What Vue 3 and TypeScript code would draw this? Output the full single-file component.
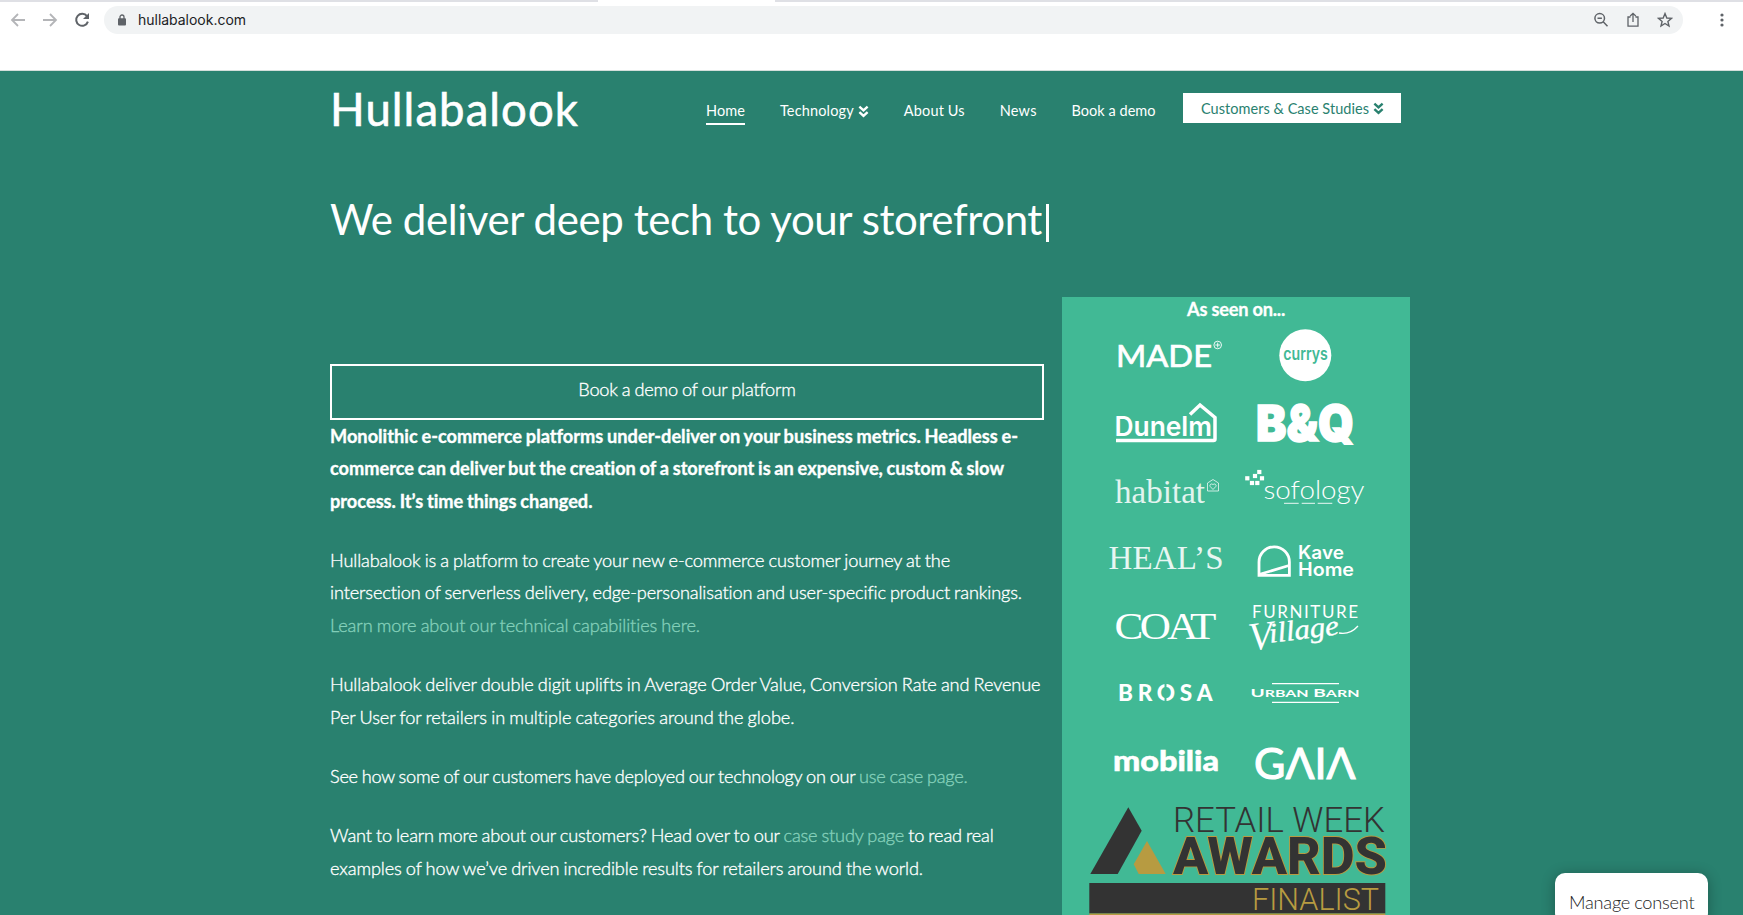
<script setup lang="ts">
import type { Directive } from 'vue'

interface NavItem {
  label: string
  width: number
  active?: boolean
  chevron?: boolean
}

const nav: NavItem[] = [
  { label: 'Home', width: 39, active: true },
  { label: 'Technology', width: 74, chevron: true },
  { label: 'About Us', width: 61 },
  { label: 'News', width: 37 },
  { label: 'Book a demo', width: 84 },
]

// Tracks text out (or in) so that it spans the given number of pixels.
const vFit: Directive<HTMLElement, number> = {
  mounted(el, binding) {
    const count = (el.textContent ?? '').trim().length
    const natural = el.getBoundingClientRect().width
    el.style.letterSpacing = `${(binding.value - natural) / count}px`
  },
}

const sofologyDots = [
  [23.3, 15], [19, 19], [11.3, 21.3], [26, 21.3], [16, 26], [21.3, 26],
]
</script>

<template>
  <div class="window">
    <div class="tabstrip"><div class="tab"></div></div>
    <div class="toolbar">
      <svg class="tool" viewBox="0 0 16 16"><path d="M15 8H2.500M8 2 2 8l6 6" stroke="#b4b5b8" /></svg>
      <svg class="tool" viewBox="0 0 16 16"><path d="M1 8h12.500M8 2l6 6-6 6" stroke="#b4b5b8" /></svg>
      <svg class="tool" viewBox="0 0 16 16">
        <path d="M13 4.200A6 6 0 1 0 13.900 9.600" stroke="#5f6368" stroke-width="2" />
        <path d="M15 1v6H9z" fill="#5f6368" stroke="none" />
      </svg>
      <div class="omnibox">
        <svg class="lock" viewBox="0 0 8 12">
          <path d="M2 5V3a2 2 0 0 1 4 0v2" fill="none" stroke="#5f6368" stroke-width="1.300" />
          <rect y="4.300" width="8" height="7.200" rx="1" fill="#5f6368" />
        </svg>
        <span class="url"><span v-fit="108">hullabalook.com</span></span>
        <svg class="tool" viewBox="0 0 16 16">
          <circle cx="6.700" cy="6.300" r="4.800" stroke="#5f6368" stroke-width="1.500" />
          <path d="M4.500 6.300h4.400M10.200 9.800l4.300 4.400" stroke="#5f6368" stroke-width="1.500" />
        </svg>
        <svg class="tool" viewBox="0 0 16 16">
          <path d="M5.500 5H3v9.200h10V5h-2.500M8 10V1.500M5.200 4 8 1.300 10.800 4" stroke="#5f6368" stroke-width="1.300" />
        </svg>
        <svg class="tool" viewBox="0 0 16 16">
          <path d="M8 1.600 9.800 6l4.700.4-3.600 3 1.100 4.600L8 11.500 4 14l1.100-4.600-3.600-3L6.200 6z" stroke="#5f6368" stroke-width="1.400" />
        </svg>
      </div>
      <svg class="dots" viewBox="0 0 4 14" fill="#5f6368">
        <circle cx="2" cy="2" r="1.600" /><circle cx="2" cy="7" r="1.600" /><circle cx="2" cy="12" r="1.600" />
      </svg>
    </div>

    <div class="page">
      <header class="header">
        <div class="brand"><span v-fit="249">Hullabalook</span></div>
        <nav class="nav">
          <a v-for="item in nav" :key="item.label" class="link" :class="{ active: item.active }">
            <span v-fit="item.width">{{ item.label }}</span>
            <svg v-if="item.chevron" class="chevron" viewBox="0 0 10 12">
              <path d="M1.200 1.500 5 5l3.800-3.500M1.200 6.500 5 10l3.800-3.500" />
            </svg>
          </a>
        </nav>
        <a class="cases">
          <span v-fit="168">Customers &amp; Case Studies</span>
          <svg class="chevron" viewBox="0 0 10 12">
            <path d="M1.200 1.500 5 5l3.800-3.500M1.200 6.500 5 10l3.800-3.500" />
          </svg>
        </a>
      </header>

      <h1 class="headline"><span v-fit="712">We deliver deep tech to your storefront</span><i class="caret"></i></h1>

      <div class="columns">
        <main class="copy">
          <a class="demo"><span v-fit="217.500" class="line">Book a demo of our platform</span></a>
          <p class="strong">
            <span v-fit="688" class="line">Monolithic e-commerce platforms under-deliver on your business metrics. Headless e-</span><br />
            <span v-fit="674" class="line">commerce can deliver but the creation of a storefront is an expensive, custom &amp; slow</span><br />
            <span v-fit="262.500" class="line">process. It’s time things changed.</span>
          </p>
          <p>
            <span v-fit="620" class="line">Hullabalook is a platform to create your new e-commerce customer journey at the</span><br />
            <span v-fit="692" class="line">intersection of serverless delivery, edge-personalisation and user-specific product rankings.</span><br />
            <a v-fit="370" class="line">Learn more about our technical capabilities here.</a>
          </p>
          <p>
            <span v-fit="710.500" class="line">Hullabalook deliver double digit uplifts in Average Order Value, Conversion Rate and Revenue</span><br />
            <span v-fit="464.500" class="line">Per User for retailers in multiple categories around the globe.</span>
          </p>
          <p><span v-fit="637.500" class="line">See how some of our customers have deployed our technology on our <a>use case page.</a></span></p>
          <p>
            <span v-fit="663.500" class="line">Want to learn more about our customers? Head over to our <a>case study page</a> to read real</span><br />
            <span v-fit="593" class="line">examples of how we’ve driven incredible results for retailers around the world.</span>
          </p>
        </main>

        <aside class="panel">
          <div class="seen"><span v-fit="98">As seen on...</span></div>
          <div class="logos">
            <svg viewBox="0 0 174 68">
              <text x="54" y="46.300" font-size="31.500" textLength="96" lengthAdjust="spacingAndGlyphs" stroke="#fff" stroke-width=".7">MADE</text>
              <circle cx="155.700" cy="24" r="3.800" class="thin" />
              <path d="M153.300 24h4.800M155.700 21.600v4.800" class="thin" />
            </svg>
            <svg viewBox="0 0 174 68">
              <circle cx="69.300" cy="34.300" r="26" />
              <text x="47.300" y="39" font-size="17" class="knock geo" font-weight="600" textLength="44.500" lengthAdjust="spacingAndGlyphs">currys</text>
            </svg>
            <svg viewBox="0 0 174 68">
              <text x="52.500" y="46.700" font-size="27" class="geo" font-weight="600" textLength="97.500" lengthAdjust="spacingAndGlyphs">Dunelm</text>
              <path d="M54 51.500h97.500q1.500 0 1.500-1.500V28.500L138 16l-10 9.500" fill="none" stroke="#fff" stroke-width="3.500" />
            </svg>
            <svg viewBox="0 0 174 68">
              <text x="20" y="52" font-size="50" class="geo" font-weight="900" textLength="98" lengthAdjust="spacingAndGlyphs" stroke="#fff" stroke-width="1.500">B&amp;Q</text>
            </svg>
            <svg viewBox="0 0 174 68">
              <text x="53" y="46.300" font-size="33" class="serif" textLength="90" opacity=".85">habitat</text>
              <path d="M145.500 34V26l5.500-3.500 5.500 3.500v8zM151 32.500l-2.800-3a1.600 1.600 0 0 1 2.800-1.800 1.600 1.600 0 0 1 2.800 1.800z" class="thin" opacity=".8" />
            </svg>
            <svg viewBox="0 0 174 68">
              <rect v-for="(d, i) in sofologyDots" :key="i" :x="d[0] - 2.100" :y="d[1] - 2.100" width="4.200" height="4.200" />
              <text x="27.500" y="42.300" font-size="24.500" font-weight="300" textLength="101" lengthAdjust="spacingAndGlyphs">sofology</text>
              <path d="M48 46.300h14.700M65.700 46.300H79M81.700 46.300h14.600" class="thin" />
            </svg>
            <svg viewBox="0 0 174 68">
              <text x="46.500" y="44" font-size="33" class="serif" textLength="115" lengthAdjust="spacing" opacity=".88">HEAL’S</text>
            </svg>
            <svg viewBox="0 0 174 68">
              <path d="M23 50.300V37a15.200 15.200 0 0 1 30.400 0v13.300zM23 49.500l30-9" fill="none" stroke="#fff" stroke-width="2.800" />
              <text x="62" y="34" font-size="18.300" class="geo" font-weight="600" textLength="46" lengthAdjust="spacingAndGlyphs">Kave</text>
              <text x="62" y="51.300" font-size="18.300" class="geo" font-weight="600" textLength="56" lengthAdjust="spacingAndGlyphs">Home</text>
            </svg>
            <svg viewBox="0 0 174 68">
              <text transform="translate(52.500 46) scale(1.150 1)" font-size="37.500" class="serif" textLength="88.500" lengthAdjust="spacing">COAT</text>
            </svg>
            <svg viewBox="0 0 174 68">
              <text x="16" y="24.700" font-size="17" textLength="106" lengthAdjust="spacing">FURNITURE</text>
              <g transform="rotate(-7 20 50)">
                <text x="13" y="57" class="serif" font-size="40" font-style="italic">V</text>
                <text x="34" y="51.500" class="serif" font-size="28" font-style="italic" textLength="70" lengthAdjust="spacingAndGlyphs" stroke="#fff" stroke-width=".4">illage</text>
              </g>
              <path d="M103 40q11 2 19-7" fill="none" stroke="#fff" stroke-width="1.300" />
            </svg>
            <svg viewBox="0 0 174 68">
              <text x="56" y="40" font-size="22.500" font-weight="900" textLength="94.500" lengthAdjust="spacing">BROSA</text>
              <path d="M103.500 22v19.500" stroke="#41b995" stroke-width="2" />
            </svg>
            <svg viewBox="0 0 174 68">
              <path d="M36 22.700h67M36 41.300h67" fill="none" stroke="#fff" stroke-width="1.300" />
              <text x="14.500" y="35.700" font-size="12" font-weight="700" textLength="109" lengthAdjust="spacingAndGlyphs">U<tspan font-size="10">RBAN</tspan> B<tspan font-size="10">ARN</tspan></text>
            </svg>
            <svg viewBox="0 0 174 68">
              <text x="51" y="42.300" font-size="29" font-weight="900" textLength="106" lengthAdjust="spacingAndGlyphs" stroke="#fff" stroke-width=".5">mobilia</text>
            </svg>
            <svg viewBox="0 0 174 68">
              <text x="18" y="49.500" font-size="43" textLength="101.500" lengthAdjust="spacingAndGlyphs" stroke="#fff" stroke-width="1.100">GΛIΛ</text>
            </svg>
          </div>
          <svg class="awards" viewBox="0 0 348 118">
            <path d="M66.300 10.300 79.700 33.700 55.700 77H28.300z" fill="#333" />
            <path d="M85 44l18.700 33h-27l-5-9.700z" fill="#b79b41" />
            <text x="111" y="34.700" font-size="34.500" font-weight="300" fill="#333" textLength="212" lengthAdjust="spacingAndGlyphs">RETAIL WEEK</text>
            <text x="111" y="76.700" font-size="51" font-weight="800" fill="#333" stroke="#b79b41" stroke-width="1.800" paint-order="stroke" textLength="214" lengthAdjust="spacingAndGlyphs">AWARDS</text>
            <rect x="27.300" y="86" width="296" height="30.500" fill="#333" />
            <rect x="27.300" y="116.500" width="296" height="1.500" fill="#b79b41" />
            <text x="190" y="112.700" font-size="31" font-weight="300" fill="#b79b41" textLength="127" lengthAdjust="spacingAndGlyphs">FINALIST</text>
          </svg>
        </aside>
      </div>
    </div>

    <div class="consent"><span v-fit="125.500" class="line">Manage consent</span></div>
  </div>
</template>

<style>
body {
  overflow: hidden;
}
</style>

<style scoped>
.window {
  position: relative;
  width: 1743px;
  height: 915px;
  overflow: hidden;
  background: #fff;
  font-family: Lato, sans-serif;
  color: #fff;
}
.window * {
  box-sizing: border-box;
}
.tabstrip {
  height: 2px;
  background: #dfe0e5;
}
.tab {
  width: 177px;
  height: 2px;
  margin-left: 598px;
  background: #fff;
}
.toolbar {
  display: flex;
  align-items: center;
  gap: 16px;
  height: 36px;
  padding-left: 10px;
}
.tool {
  width: 16px;
  height: 16px;
  fill: none;
  stroke-width: 1.800;
}
.omnibox {
  display: flex;
  align-items: center;
  gap: 16px;
  width: 1579px;
  height: 28px;
  margin-left: -2px;
  padding: 0 10px 0 14px;
  border-radius: 14px;
  background: #f1f3f4;
}
.lock {
  width: 8px;
  height: 12px;
}
.url {
  flex: 1;
  margin-left: -4px;
  font: 14px/28px Inter, sans-serif;
  color: #202124;
}
.dots {
  width: 4px;
  height: 14px;
  margin-left: 21px;
}
.page {
  height: 845px;
  margin-top: 32px;
  padding: 0 333px 0 330px;
  border-top: 1px solid #d3dedb;
  background: #29816f;
}
.header {
  display: flex;
  height: 108px;
}
.brand {
  width: 376px;
  font-size: 45.500px;
  line-height: 76px;
  white-space: nowrap;
  -webkit-text-stroke: 0.600px #fff;
}
.nav {
  display: flex;
  gap: 34.900px;
  width: 477px;
  padding-top: 28px;
  white-space: nowrap;
  font-size: 14.500px;
  line-height: 22px;
}
.link {
  display: flex;
  align-items: center;
  gap: 4px;
  height: 26px;
  border-bottom: 2px solid transparent;
}
.link.active {
  border-bottom-color: #fff;
}
.chevron {
  width: 11px;
  height: 13px;
  fill: none;
  stroke: currentColor;
  stroke-width: 2.200;
}
.cases {
  display: flex;
  align-items: center;
  gap: 4px;
  width: 218px;
  height: 30px;
  margin-top: 22px;
  padding-left: 18px;
  background: #fff;
  color: #29816f;
  font-size: 14.500px;
  white-space: nowrap;
}
.headline {
  display: flex;
  align-items: center;
  height: 80px;
  margin: 0;
  font-size: 42px;
  font-weight: 400;
  white-space: nowrap;
}
.caret {
  width: 3px;
  height: 38px;
  margin: 7px 0 0 4px;
  background: #fff;
}
.columns {
  display: flex;
  justify-content: space-between;
  margin-top: 38px;
}
.copy {
  width: 714px;
  padding-top: 67px;
  font-size: 18.200px;
  font-weight: 300;
  line-height: 32.700px;
  white-space: nowrap;
  font-variant-ligatures: none;
  -webkit-text-stroke: 0.350px currentColor;
}
.line {
  display: inline-block;
  vertical-align: top;
  word-spacing: -0.700px;
}
.copy p {
  margin: 0 0 26.400px;
}
.copy .strong {
  margin: -0.400px 0 26.000px;
  font-weight: 700;
}
.copy p a {
  color: #84d0ba;
}
.demo {
  display: block;
  height: 56px;
  border: 2px solid #fff;
  line-height: 46px;
  text-align: center;
}
.panel {
  width: 348px;
  height: 618px;
  background: #41b995;
}
.seen {
  height: 24px;
  font-size: 18.200px;
  font-weight: 700;
  line-height: 25px;
  text-align: center;
  -webkit-text-stroke: 0.300px #fff;
}
.logos {
  display: grid;
  grid-template-columns: 174px 174px;
  grid-auto-rows: 68px;
}
.logos svg {
  width: 174px;
  height: 68px;
  fill: #fff;
}
.logos .serif {
  font-family: 'Liberation Serif', serif;
}
.logos .geo {
  font-family: Inter, sans-serif;
}
.logos .knock {
  fill: #41b995;
}
.logos .thin {
  fill: none;
  stroke: #fff;
  stroke-width: 0.900;
}
.awards {
  display: block;
  width: 348px;
  height: 118px;
  font-family: Roboto, sans-serif;
}
.consent {
  position: absolute;
  left: 1555px;
  top: 873px;
  width: 153px;
  height: 50px;
  padding-left: 14px;
  border-radius: 10px;
  background: #fff;
  box-shadow: 0 2px 14px rgba(0, 0, 0, 0.300);
  color: #222;
  font-size: 18.200px;
  font-weight: 300;
  line-height: 59px;
  white-space: nowrap;
}
</style>
